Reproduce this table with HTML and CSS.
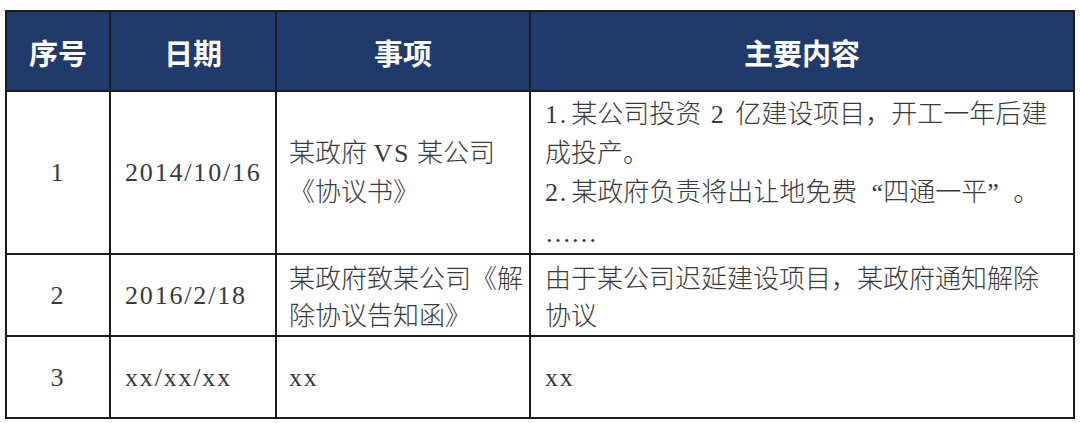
FILE: index.html
```html
<!DOCTYPE html>
<html lang="zh-CN">
<head>
<meta charset="utf-8">
<title>协议事项表</title>
<link rel="stylesheet" href="styles.css">
</head>
<body>
<div class="page">
  <div class="table" role="table">
    <div class="cell head"><div class="in">序号</div></div>
    <div class="cell head"><div class="in">日期</div></div>
    <div class="cell head"><div class="in">事项</div></div>
    <div class="cell head"><div class="in">主要内容</div></div>

    <div class="cell num"><div class="in"><span class="lat">1</span></div></div>
    <div class="cell date"><div class="in"><span class="lat">2014/10/16</span></div></div>
    <div class="cell text"><div class="in">某政府 <span class="lat">VS</span> 某公司<br>《协议书》</div></div>
    <div class="cell text wide"><div class="in"><span class="lat idx">1.</span>某公司投资 <span class="lat">2</span> 亿建设项目，开工一年后建<br>成投产。<br><span class="lat idx">2.</span>某政府负责将出让地免费<span class="fw open">“</span>四通一平<span class="fw close">”</span>。<br><span class="dots">……</span></div></div>

    <div class="cell num"><div class="in"><span class="lat">2</span></div></div>
    <div class="cell date"><div class="in"><span class="lat">2016/2/18</span></div></div>
    <div class="cell text shift"><div class="in">某政府致某公司《解<br>除协议告知函》</div></div>
    <div class="cell text wide shift"><div class="in">由于某公司迟延建设项目，某政府通知解除<br>协议</div></div>

    <div class="cell num"><div class="in"><span class="lat">3</span></div></div>
    <div class="cell date"><div class="in"><span class="lat">xx/xx/xx</span></div></div>
    <div class="cell text"><div class="in"><span class="lat">xx</span></div></div>
    <div class="cell text wide"><div class="in"><span class="lat">xx</span></div></div>
  </div>
</div>
</body>
</html>
```

FILE: styles.css
```css
html, body {
  margin: 0;
  padding: 0;
  background: #ffffff;
}

.page {
  padding: 10px 0 0 5px;
}

.table {
  display: grid;
  grid-template-columns: 102px 164px 252px 542px;
  grid-template-rows: 78px 161px 80px 80px;
  gap: 2px;
  padding: 2px;
  width: 1066px;
  background: #1c1c1e;
}

.cell {
  background: #ffffff;
  display: flex;
  align-items: center;
  font-family: "Liberation Serif", "Noto Sans CJK SC", serif;
  font-size: 26px;
  line-height: 39px;
  color: #3a3a3a;
  font-weight: 300;
  white-space: nowrap;
  overflow: hidden;
}

.in {
  display: block;
}

.head {
  background: #1f3a6b;
  color: #ffffff;
  font-family: "Noto Sans CJK SC", sans-serif;
  font-weight: 700;
  font-size: 29px;
  justify-content: center;
  padding-top: 2px;
}

.num {
  justify-content: center;
}

.date {
  padding-left: 14px;
}

.text {
  padding-left: 12px;
}

.wide {
  padding-left: 14px;
  word-spacing: 0.12em;
}

.shift {
  padding-top: 5px;
  line-height: 37px;
}

.lat {
  font-family: "Liberation Serif", serif;
  letter-spacing: 0.07em;
  font-weight: 400;
}

.idx {
  margin-right: 3px;
}

.fw {
  display: inline-block;
  width: 1em;
  font-family: "Liberation Serif", serif;
  font-weight: 400;
}

.open {
  text-align: right;
}

.close {
  text-align: left;
}

.dots {
  font-family: "Liberation Serif", serif;
  font-weight: 400;
  position: relative;
  top: 2px;
}
```
